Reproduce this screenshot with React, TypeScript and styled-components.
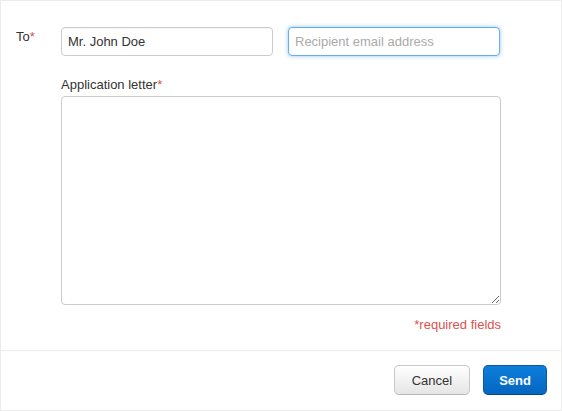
import React from 'react';
import styled, { createGlobalStyle } from 'styled-components';

const GlobalStyle = createGlobalStyle`
  html, body {
    margin: 0;
    padding: 0;
    background: #ffffff;
  }
  body {
    font-family: 'Liberation Sans', Helvetica, Arial, sans-serif;
    font-size: 13px;
    color: #333333;
  }
`;

const Panel = styled.div`
  box-sizing: border-box;
  width: 562px;
  height: 411px;
  border: 1px solid #ececec;
  display: flex;
  flex-direction: column;
`;

const Body = styled.div`
  box-sizing: border-box;
  height: 349px;
  padding: 26px 60px 0 15px;
  display: grid;
  grid-template-columns: 45px 1fr;
  align-content: start;
`;

const Label = styled.label`
  padding-top: 2px;
  line-height: 15px;
`;

const Star = styled.span`
  color: #d9534f;
`;

const Fields = styled.div`
  display: flex;
  flex-direction: column;
`;

const Row = styled.div`
  display: flex;
  gap: 15px;
`;

const Input = styled.input<{ $focused?: boolean }>`
  box-sizing: border-box;
  width: 212px;
  height: 29px;
  padding: 0 6px;
  border: 1px solid ${(p) => (p.$focused ? '#66afe9' : '#cccccc')};
  border-radius: 4px;
  box-shadow: ${(p) =>
    p.$focused ? '0 0 4px rgba(102, 175, 233, 0.7)' : 'inset 0 1px 1px rgba(0, 0, 0, 0.04)'};
  font-family: inherit;
  font-size: 13px;
  color: #333333;
  outline: none;
  caret-color: #333333;
  &::placeholder {
    color: #aaaaaa;
  }
`;

const FieldTitle = styled.div`
  margin: 21px 0 4px;
  line-height: 15px;
`;

const TextArea = styled.textarea`
  box-sizing: border-box;
  width: 440px;
  height: 209px;
  margin: 0;
  border: 1px solid #cccccc;
  border-radius: 4px;
  font-family: inherit;
  font-size: 13px;
  outline: none;
`;

const Note = styled.div`
  margin-top: 12px;
  width: 440px;
  text-align: right;
  color: #d9534f;
  line-height: 15px;
`;

const Footer = styled.div`
  border-top: 1px solid #ececec;
  flex: 1;
  display: flex;
  justify-content: flex-end;
  align-items: flex-start;
  gap: 13px;
  padding: 14px 14px 0 0;
`;

const Button = styled.button<{ $primary?: boolean }>`
  box-sizing: border-box;
  height: 30px;
  padding: 0 ${(p) => (p.$primary ? '15px' : '17px')};
  border-radius: 5px;
  font-family: inherit;
  font-size: 13px;
  cursor: pointer;
  border: 1px solid ${(p) => (p.$primary ? '#0a5aa6' : '#c8c8c8')};
  border-bottom-color: ${(p) => (p.$primary ? '#064a8c' : '#b8b8b8')};
  background: ${(p) =>
    p.$primary
      ? 'linear-gradient(#0c7fdb, #0566c0)'
      : 'linear-gradient(#ffffff, #e5e5e5)'};
  color: ${(p) => (p.$primary ? '#ffffff' : '#333333')};
  font-weight: ${(p) => (p.$primary ? 'bold' : 'normal')};
`;

export default function App() {
  return (
    <>
      <GlobalStyle />
      <Panel>
        <Body>
          <Label>
            To<Star>*</Star>
          </Label>
          <Fields>
            <Row>
              <Input defaultValue="Mr. John Doe" />
              <Input $focused autoFocus placeholder="Recipient email address" />
            </Row>
            <FieldTitle>
              Application letter<Star>*</Star>
            </FieldTitle>
            <TextArea />
            <Note>*required fields</Note>
          </Fields>
        </Body>
        <Footer>
          <Button>Cancel</Button>
          <Button $primary>Send</Button>
        </Footer>
      </Panel>
    </>
  );
}
